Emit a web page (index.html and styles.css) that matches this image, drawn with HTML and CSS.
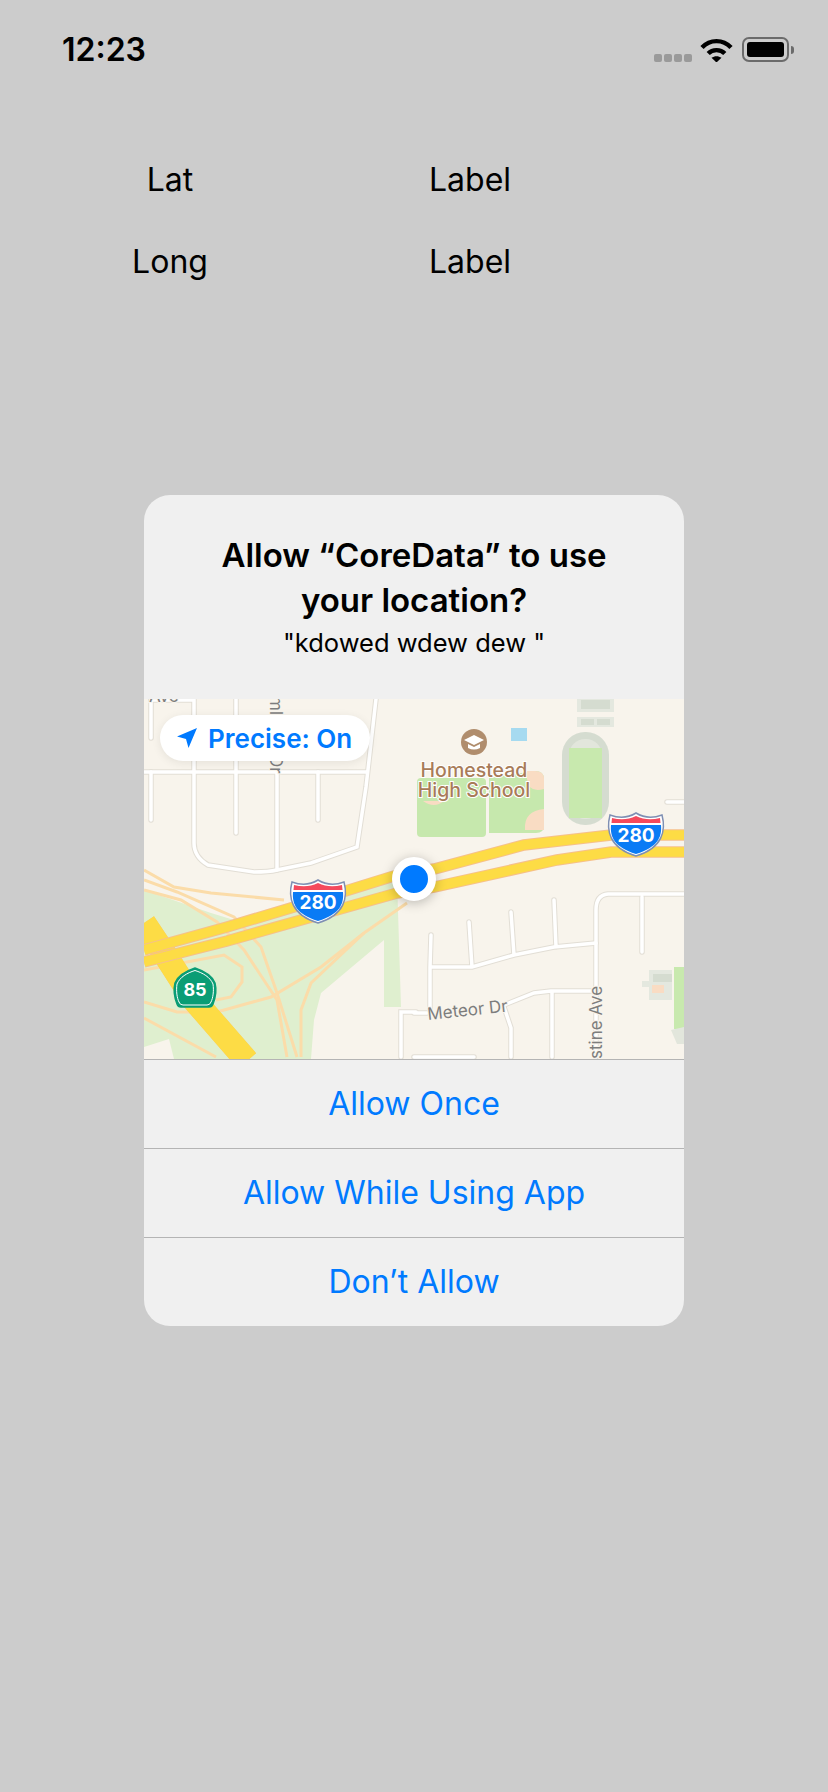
FILE: index.html
```html
<!DOCTYPE html>
<html lang="en">
<head>
    <meta charset="UTF-8">
    <title>CoreData</title>
    <link rel="stylesheet" href="styles.css">
</head>
<body>
    <div class="status-bar">
        <span class="time">12:23</span>
        <div class="status-icons">
            <div class="signal">
                <span class="dot"></span><span class="dot"></span><span class="dot"></span><span class="dot"></span>
            </div>
            <svg class="wifi" width="33" height="25" viewBox="0 0 33 25">
                <path d="M2 10.5C10 2 23 2 31 10.5" fill="none" stroke="#000" stroke-width="4.4"/>
                <path d="M8.2 16.5C12.5 12 20.500 12 24.800 16.500" fill="none" stroke="#000" stroke-width="4.400"/>
                <path d="M11.500 20.700C14.500 18.600 18.500 18.600 21.500 20.700L16.500 25.500Z" fill="#000"/>
            </svg>
            <div class="battery">
                <div class="battery-body"><div class="battery-fill"></div></div>
                <div class="battery-nub"></div>
            </div>
        </div>
    </div>

    <div class="rows">
        <div class="row">
            <span class="row-key">Lat</span>
            <span class="row-value">Label</span>
        </div>
        <div class="row">
            <span class="row-key">Long</span>
            <span class="row-value">Label</span>
        </div>
    </div>

    <div class="alert">
        <div class="alert-head">
            <h2 class="alert-title">Allow “CoreData” to use<br>your location?</h2>
            <p class="alert-message">"kdowed wdew dew "</p>
        </div>

        <div class="map">
            <svg class="map-art" width="540" height="360" viewBox="0 0 540 360">
                <defs>
                    <g id="shield280">
                        <path d="M-26 -19C-18 -16 -8 -16 0 -21C8 -16 18 -16 26 -19C30 -4 27 14 0 22C-27 14 -30 -4 -26 -19Z" fill="#fff" stroke="#7f8fb3" stroke-width="1.500"/>
                        <path d="M-24 -16C-16 -14 -8 -14 0 -18C8 -14 16 -14 24 -16L24.500 -11H-24.500Z" fill="#f4495c"/>
                        <path d="M-25 -9H25C26 3 22 13 0 20C-22 13 -26 3 -25 -9Z" fill="#0a7bf5"/>
                        <text class="shield-text" x="0" y="8" text-anchor="middle">280</text>
                    </g>
                    <g id="streets">
                        <path d="M0 73H222M7 1H50M50 0V144Q50 158 64 166L110 173Q125 173 133 171L167 164L213 148L222 88L232 0"/>
                        <path d="M7 0V39M7 73V121M92 0V134M133 73V171M174 73V121"/>
                        <path d="M287 236L286 268V312M286 268H328L370 256L410 248L452 244M325 223L328 268M367 213L370 256M410 201L412 248"/>
                        <path d="M452 358V211Q452 196 464 195H540M498 198V253M523 103H540"/>
                        <path d="M270 314H283M360 306L390 294L407 292H447M360 308L367 329V358M408 292V358"/>
                        <path d="M257 358V313H272M270 358H330"/>
                    </g>
                </defs>

                <rect width="540" height="360" fill="#f8f4ec"/>

                <path d="M0 191L67 214L90 221L150 205L253 180L257 308H240V241L177 294L170 321L167 360H30L25 340L0 348Z" fill="#dfefcf"/>

                <rect x="273" y="79" width="69" height="59" rx="4" fill="#c6e8ad"/>
                <path d="M345 79L391 72Q400 72 400 80V127Q400 134 392 134H345Z" fill="#c6e8ad"/>
                <path d="M383 72H391Q400 72 400 80V90Q384 94 383 80Z" fill="#f9dcc3"/>
                <path d="M400 110Q380 112 381 130V131H400Z" fill="#f9dcc3"/>
                <path d="M279 102Q290 110 300 102Z" fill="#f9dcc3"/>
                <rect x="418" y="33" width="47" height="93" rx="23" fill="#d5dcd0"/>
                <rect x="425" y="40" width="33" height="80" rx="16" fill="#e2e6dc"/>
                <rect x="425" y="49" width="33" height="70" fill="#c8e9ae"/>
                <rect x="433" y="0" width="37" height="13" fill="#e4e8df"/>
                <rect x="437" y="1" width="29" height="9" fill="#d5dcd0"/>
                <rect x="433" y="18" width="37" height="10" fill="#e4e8df"/>
                <rect x="437" y="20" width="13" height="6" fill="#d5dcd0"/>
                <rect x="453" y="20" width="13" height="6" fill="#d5dcd0"/>
                <rect x="367" y="29" width="16" height="13" fill="#a6daf0"/>
                <path d="M505 271H528V301H505V288H498V282H505Z" fill="#e4e8df"/>
                <rect x="509" y="275" width="19" height="8" fill="#d5dcd0"/>
                <rect x="508" y="286" width="12" height="8" fill="#f9dcc3"/>
                <rect x="530" y="268" width="10" height="62" fill="#c8e9ae"/>
                <path d="M527 331L540 328V345L533 345Z" fill="#e2e6dc"/>

                <g class="ramp">
                    <path d="M0 171L30 188L67 194L140 201"/>
                    <path d="M0 181L33 193L90 218L117 248L133 294L153 358"/>
                    <path d="M0 191L37 201L73 223L100 251L133 301L143 358"/>
                    <path d="M0 271L80 256L98 268V283L87 298L72 301"/>
                    <path d="M0 303L33 313H73L127 298L177 268L220 234L263 204"/>
                    <path d="M0 319L72 358"/>
                    <path d="M220 234L167 284L157 311V358"/>
                </g>

                <use href="#streets" class="street-edge"/>
                <use href="#streets" class="street"/>

                <path class="hwy-edge hwy-wide" d="M0 224L20 254L50 301L103 362"/>
                <path class="hwy hwy-wide" d="M0 224L20 254L50 301L103 362"/>
                <g class="hwy-edge">
                    <path d="M0 251L83 228L150 208L253 176L290 170L380 146L467 136H540"/>
                    <path d="M0 263L83 242L150 223L253 194L290 188L413 161L467 153H540"/>
                </g>
                <g class="hwy">
                    <path d="M0 251L83 228L150 208L253 176L290 170L380 146L467 136H540"/>
                    <path d="M0 263L83 242L150 223L253 194L290 188L413 161L467 153H540"/>
                </g>

                <circle cx="330" cy="43" r="13" fill="#b08d6d"/>
                <path d="M320 41L330 36L340 41L330 46Z" fill="#fff"/>
                <path d="M324 45V49Q330 52 336 49V45L330 48Z" fill="#fff"/>
                <text class="school-text" x="330" y="78" text-anchor="middle">Homestead</text>
                <text class="school-text" x="330" y="98" text-anchor="middle">High School</text>

                <text class="road-text" x="5" y="3">Ave</text>
                <text class="road-text" transform="translate(126 0) rotate(90)" x="-3" y="0">ml</text>
                <text class="road-text" transform="translate(126 56) rotate(90)">Dr</text>
                <text class="road-text" transform="translate(284 321) rotate(-6)">Meteor Dr</text>
                <text class="road-text" transform="translate(458 360) rotate(-90)">stine Ave</text>

                <use href="#shield280" x="174" y="202"/>
                <use href="#shield280" x="492" y="135"/>

                <path d="M51 269C60 272 68 276 71 284C73 292 71 300 69 305Q68 308 65 308H37Q34 308 33 305C31 300 29 292 31 284C34 276 42 272 51 269Z" fill="#0a9d75" stroke="#0a9d75" stroke-width="1.500"/>
                <path d="M51 271.500C59 274 66 278 69 285C70 292 69 299 67 303Q66 306 63 306H39Q36 306 35 303C33 299 32 292 33 285C36 278 43 274 51 271.500Z" fill="none" stroke="#fff" stroke-width="1"/>
                <text class="shield-text shield-small" x="51" y="297" text-anchor="middle">85</text>
            </svg>

            <div class="precise">
                <svg width="20" height="20" viewBox="0 0 20 20">
                    <path d="M20 0L11.500 20L9 11L0 8.500Z" fill="#007aff"/>
                </svg>
                <span>Precise: On</span>
            </div>
            <div class="user-dot"></div>
        </div>

        <div class="alert-btn">Allow Once</div>
        <div class="alert-btn">Allow While Using App</div>
        <div class="alert-btn">Don’t Allow</div>
    </div>
</body>
</html>
```

FILE: styles.css
```css
html, body {
    margin: 0;
    height: 100%;
}

body {
    background: #cccccc;
    font-family: Inter, "Noto Sans", sans-serif;
    color: #000;
    height: 1792px;
    overflow: hidden;
}

.status-bar {
    display: flex;
    justify-content: space-between;
    align-items: center;
    height: 25px;
    padding: 37px 34px 0 62px;
}

.time {
    font-size: 32px;
    font-weight: 600;
}

.status-icons {
    display: flex;
    align-items: center;
}

.signal {
    display: flex;
    gap: 2px;
    margin: 16px 8px 0 0;
}

.dot {
    width: 8px;
    height: 8px;
    border-radius: 2px;
    background: #9a9a9a;
}

.wifi {
    display: block;
    margin-right: 9px;
}

.battery {
    display: flex;
    align-items: center;
}

.battery-body {
    width: 47px;
    height: 25px;
    box-sizing: border-box;
    padding: 3px;
    border: 2px solid #6b6b6b;
    border-radius: 7px;
}

.battery-fill {
    height: 100%;
    background: #000;
    border-radius: 3px;
}

.battery-nub {
    width: 3px;
    height: 8px;
    margin-left: 2px;
    background: #6b6b6b;
    border-radius: 0 3px 3px 0;
}

.rows {
    display: flex;
    flex-direction: column;
    gap: 42px;
    padding-top: 98px;
}

.row {
    display: grid;
    grid-template-columns: 340px auto;
    height: 40px;
    line-height: 40px;
    font-size: 32px;
}

.row-key {
    text-align: center;
}

.row-value {
    margin-left: 89px;
}

.alert {
    width: 540px;
    margin: 213px 0 0 144px;
    background: #f0f0f0;
    border-radius: 26px;
    overflow: hidden;
}

.alert-head {
    height: 204px;
    box-sizing: border-box;
    padding-top: 38px;
    text-align: center;
}

.alert-title {
    margin: 0;
    font-size: 33px;
    font-weight: 600;
    line-height: 45px;
}

.alert-message {
    margin: 2px 0 0;
    font-size: 25.500px;
    line-height: 36px;
}

.map {
    position: relative;
    height: 360px;
    border-bottom: 1px solid #b4b4b4;
}

.map-art {
    display: block;
}

.ramp path {
    fill: none;
    stroke: #fbdca9;
    stroke-width: 3px;
}

.street, .street-edge {
    fill: none;
}

.street-edge {
    stroke: #e2ded5;
    stroke-width: 5.500px;
    stroke-linecap: round;
}

.street {
    stroke: #fff;
    stroke-width: 3.500px;
    stroke-linecap: round;
}

.hwy, .hwy-edge {
    fill: none;
}

.hwy {
    stroke: #fddc45;
    stroke-width: 9.500px;
}

.hwy-edge {
    stroke: #f6c08a;
    stroke-width: 11.500px;
}

.hwy-wide {
    stroke-width: 24px;
}

.school-text {
    font-family: Inter, sans-serif;
    font-size: 19.500px;
    font-weight: 500;
    fill: #a87b58;
    stroke: #fff;
    stroke-width: 2px;
    paint-order: stroke;
}

.road-text {
    font-family: Inter, sans-serif;
    font-size: 17px;
    fill: #7d7d7d;
    stroke: #f8f4ec;
    stroke-width: 2px;
    paint-order: stroke;
}

.shield-text {
    font-family: Inter, sans-serif;
    font-size: 19px;
    font-weight: 700;
    fill: #fff;
}

.shield-small {
    font-size: 18px;
}

.precise {
    position: absolute;
    left: 16px;
    top: 16px;
    display: flex;
    align-items: center;
    gap: 11px;
    width: 210px;
    height: 46px;
    box-sizing: border-box;
    padding-left: 17px;
    background: #fff;
    border-radius: 23px;
    box-shadow: 0 2px 10px rgba(0, 0, 0, 0.08);
    color: #007aff;
    font-size: 26px;
    font-weight: 600;
}

.precise svg {
    display: block;
}

.user-dot {
    position: absolute;
    left: 248px;
    top: 158px;
    width: 28px;
    height: 28px;
    border: 8px solid #fff;
    border-radius: 50%;
    background: #007aff;
    box-shadow: 0 2px 12px rgba(0, 0, 0, 0.25);
}

.alert-btn {
    height: 88px;
    line-height: 88px;
    text-align: center;
    font-size: 32px;
    color: #007aff;
    border-bottom: 1px solid #b4b4b4;
}

.alert-btn:last-child {
    border-bottom: none;
}
```
